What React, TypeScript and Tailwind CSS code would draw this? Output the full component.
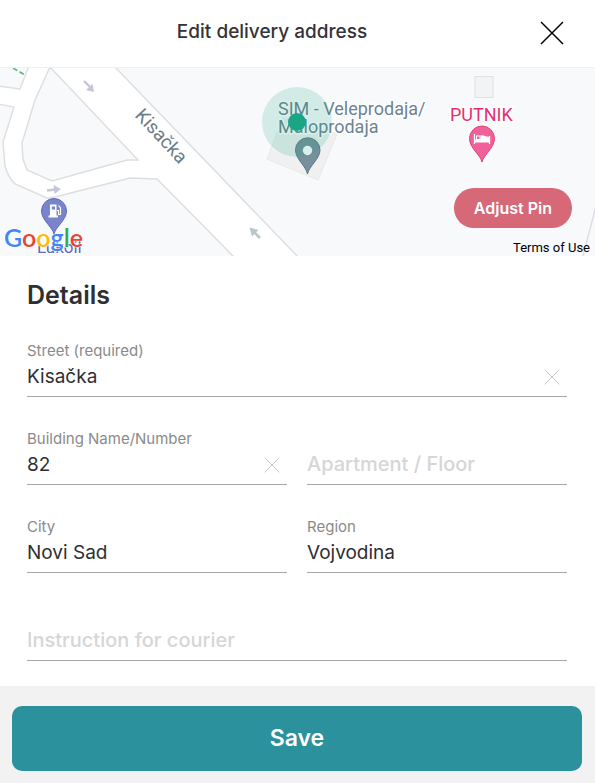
import React, { useState } from 'react';

interface FieldProps {
  id: string;
  label: string;
  initial?: string;
  clearable?: boolean;
  className?: string;
}

const GOOGLE_LETTERS = [
  { char: 'G', color: '#4285f4' },
  { char: 'o', color: '#ea4335' },
  { char: 'o', color: '#fbbc04' },
  { char: 'g', color: '#4285f4' },
  { char: 'l', color: '#34a853' },
  { char: 'e', color: '#ea4335' },
];

const Cross: React.FC<{ className: string; strokeWidth: number }> = ({ className, strokeWidth }) => (
  <svg viewBox="0 0 24 24" fill="none" stroke="currentColor" strokeWidth={strokeWidth} className={className} aria-hidden="true">
    <path d="M1 1 23 23M23 1 1 23" />
  </svg>
);

const Field: React.FC<FieldProps> = ({ id, label, initial = '', clearable = false, className = '' }) => {
  const [value, setValue] = useState(initial);
  const filled = value !== '';

  return (
    <div className={`flex h-[58px] flex-col justify-end border-b border-[#a6a6a6] ${className}`}>
      {/* The placeholder stands in for the label until something is typed */}
      {filled && (
        <label htmlFor={id} className="text-[15px] leading-6 text-[#8a8a8a]">
          {label}
        </label>
      )}
      <div className="flex h-[33px] items-start">
        <input
          id={id}
          value={value}
          placeholder={label}
          aria-label={filled ? undefined : label}
          onChange={(e) => setValue(e.target.value)}
          className="h-7 min-w-0 flex-1 bg-transparent text-[19px] text-[#2e2e33] outline-none placeholder:text-xl placeholder:font-medium placeholder:text-[#d6d6d6]"
        />
        {clearable && filled && (
          <button type="button" aria-label={`Clear ${label}`} onClick={() => setValue('')} className="flex h-7 w-[30px] items-center justify-center text-[#c8c8c8]">
            <Cross className="size-4" strokeWidth={1.5} />
          </button>
        )}
      </div>
    </div>
  );
};

const DeliveryMap: React.FC = () => (
  <svg viewBox="0 0 595 188" preserveAspectRatio="xMidYMid slice" className="absolute inset-0 size-full" fontFamily="Roboto, sans-serif" role="img" aria-label="Map around Kisačka">
    <rect width="595" height="188" fill="#f8f9fb" />
    <path d="M13 0 25 7" stroke="#5fb57c" strokeWidth="1.6" strokeDasharray="5 2.5" />

    {/* Roads */}
    <path
      d="M29-2 20 21-2 18V36L14 39 3 74 5 98Q8 109 15 116L47 130 55 129 130 110 157 111 235 190H299L114-2Z"
      fill="#fff" stroke="#dcdee1" strokeWidth="1.4"
    />
    <path d="M50-1 35 32 22 75 23 91 27 102 52 113 127 92H138Z" fill="#f8f9fb" stroke="#dcdee1" strokeWidth="1.4" />
    <path d="M596 138 583 188" fill="none" stroke="#dcdee1" strokeWidth="1.4" />
    <g stroke="#c5c6da" strokeWidth="2.4" fill="#c5c6da">
      <path d="M84 13 91 20" /><path d="M94 24 86 22 92.5 16Z" stroke="none" />
      <path d="M47 122.5 55 121.5" /><path d="M61 121 53.5 117 54.5 126Z" stroke="none" />
    </g>
    <g stroke="#bac6ca" strokeWidth="2.6" fill="#bac6ca">
      <path d="M260 170 253 163" /><path d="M249.5 159.5 258.5 162 252 168.5Z" stroke="none" />
    </g>

    {/* Buildings */}
    <path d="M283 50 337 66 318 112 267 91Z" fill="#f0f0f0" stroke="#e8e9ea" />
    <rect x="475" y="8.5" width="18" height="21" fill="#f2f3f4" stroke="#dfe1e3" />

    <text transform="translate(134 48) rotate(47)" fontSize="19" fill="#6d7d87">Kisačka</text>

    {/* Warehouse label and pin */}
    <g fontSize="18" fill="#6b838f" stroke="#fff" strokeWidth="3" paintOrder="stroke" strokeLinejoin="round">
      <text x="278" y="47">SIM - Veleprodaja/</text>
      <text x="278" y="65">Maloprodaja</text>
    </g>
    <path d="M307.5 106C306 98 295.5 91 295.5 82A12.2 12.2 0 0 1 320 82C320 91 309 98 307.5 106Z" fill="#788f9c" stroke="#5f7985" />
    <circle cx="307.5" cy="82.5" r="4.7" fill="#fff" />
    <circle cx="297" cy="54" r="35" fill="#1aa585" fillOpacity="0.17" />
    <circle cx="297" cy="54" r="9" fill="#1aa585" />

    {/* Hotel */}
    <text x="450" y="53" fontSize="18" fill="#e32f72" stroke="#fff" strokeWidth="3" paintOrder="stroke">PUTNIK</text>
    <path d="M482 94C480.5 87 469.5 80 469.5 70.5A12.5 12.5 0 0 1 494.5 70.5C494.5 80 483.5 87 482 94Z" fill="#f0609a" stroke="#e0437f" />
    <path d="M474.5 66V76M489.5 68V76" stroke="#fff" strokeWidth="1.3" />
    <path d="M475 71.5H490V74.5H475ZM480.5 67.5C484 66.5 486 69.5 490 68.5V72H480.5Z" fill="#fff" />
    <rect x="476.5" y="68" width="3.5" height="3.5" fill="none" stroke="#fff" />

    {/* Fuel station */}
    <text x="37" y="185" fontSize="17" fill="#5c67bd" stroke="#fff" strokeWidth="2" paintOrder="stroke">Lukoil</text>
    <path d="M54 166C52.5 159 41.5 152 41.5 143A12.5 12.5 0 0 1 66.5 143C66.5 152 55.5 159 54 166Z" fill="#7984cb" stroke="#5f6bbd" />
    <path d="M50 136.5H56.5V147.5H58V149.5H48.5V147.5H50ZM51.8 138.5V141.5H55V138.5Z" fill="#fff" fillRule="evenodd" />
    <path d="M57 142.5H58.5V146.5H60.5V140L58.5 137.5" fill="none" stroke="#fff" strokeWidth="1.2" />
    <text x="4" y="179" fontSize="25" fontFamily="Lato, sans-serif" fontWeight="600" stroke="#fff" strokeWidth="1" paintOrder="stroke">
      {GOOGLE_LETTERS.map((l, i) => (
        <tspan key={i} fill={l.color}>{l.char}</tspan>
      ))}
    </text>
  </svg>
);

const App: React.FC = () => {
  return (
    <form onSubmit={(e) => e.preventDefault()} className="flex min-h-screen flex-col bg-white font-['Inter',sans-serif]">
      <header className="flex h-17 items-center border-b border-[#f0f0f0] pb-0.5 pl-4 pr-[19px]">
        <h1 className="flex-1 pb-0.5 text-center text-[19px] leading-7 font-medium text-[#333338]">Edit delivery address</h1>
        <button type="button" aria-label="Close" className="flex size-12 items-center justify-center text-black">
          <Cross className="size-6" strokeWidth={1.5} />
        </button>
      </header>

      <section className="relative h-47 overflow-hidden">
        <DeliveryMap />
        <button type="button" className="absolute right-[23px] bottom-7 h-10 rounded-full bg-[#d66878] px-5 text-base font-semibold text-white">
          Adjust Pin
        </button>
        <a href="#terms" className="absolute right-[5px] bottom-0 font-['Roboto',sans-serif] text-[13px] leading-4 text-black">Terms of Use</a>
      </section>

      <main className="flex-1 pt-[21px] pr-7 pb-6 pl-[27px]">
        <h2 className="mb-[26px] text-[25px] leading-9 font-semibold text-[#2e2e33]">Details</h2>
        <div className="grid grid-cols-2 gap-x-5 gap-y-[30px]">
          <Field id="street" label="Street (required)" initial="Kisačka" clearable className="col-span-2" />
          <Field id="building" label="Building Name/Number" initial="82" clearable />
          <Field id="apartment" label="Apartment / Floor" />
          <Field id="city" label="City" initial="Novi Sad" />
          <Field id="region" label="Region" initial="Vojvodina" />
          <Field id="instruction" label="Instruction for courier" className="col-span-2" />
        </div>
      </main>

      <footer className="bg-[#f2f2f2] pt-5 pr-[13px] pb-3 pl-3">
        <button type="submit" className="h-[65px] w-full rounded-[10px] bg-[#2b919d] text-[23px] font-semibold text-white">
          Save
        </button>
      </footer>
    </form>
  );
};

export default App;
